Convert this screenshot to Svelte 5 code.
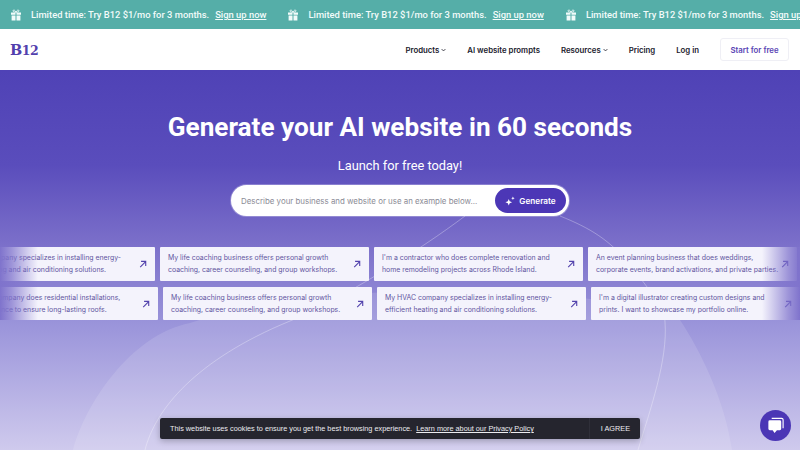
<script lang="ts">
  const row1 = [
    ['My HVAC company specializes in installing energy-', 'efficient heating and air conditioning solutions.'],
    ['My life coaching business offers personal growth', 'coaching, career counseling, and group workshops.'],
    ["I'm a contractor who does complete renovation and", 'home remodeling projects across Rhode Island.'],
    ['An event planning business that does weddings,', 'corporate events, brand activations, and private parties.']
  ];
  const row2 = [
    ['My roofing company does residential installations,', 'and maintenance to ensure long-lasting roofs.'],
    ['My life coaching business offers personal growth', 'coaching, career counseling, and group workshops.'],
    ['My HVAC company specializes in installing energy-', 'efficient heating and air conditioning solutions.'],
    ["I'm a digital illustrator creating custom designs and", 'prints. I want to showcase my portfolio online.']
  ];
  const promos = [0, 1, 2];
</script>

{#snippet gift()}
  <svg class="gift" viewBox="0 0 12 12" width="12" height="12" aria-hidden="true">
    <path d="M1 3.400h4.500v2.300H1zM6.500 3.400H11v2.300H6.500zM1.600 6.500h3.900v5H1.600zM6.500 6.500h3.900v5H6.500z" fill="#f2fbfa" />
    <path d="M6 3.200C5 .8 3.200.5 3 1.800c-.1 1 1.500 1.400 3 1.400 1.500 0 3.100-.4 3-1.400C8.800.5 7 .8 6 3.200z" fill="none" stroke="#f2fbfa" stroke-width=".9" />
  </svg>
{/snippet}

{#snippet arrow()}
  <svg class="arrow" viewBox="0 0 10 10" width="8" height="8" aria-hidden="true">
    <path d="M1.500 8.800 8.300 2M2.600 1.700h5.800v5.800" fill="none" stroke="currentColor" stroke-width="1.400" />
  </svg>
{/snippet}

{#snippet chevron()}
  <svg class="chev" viewBox="0 0 8 5" width="5" height="4" aria-hidden="true">
    <path d="M1 1l3 3 3-3" fill="none" stroke="currentColor" stroke-width="1.300" />
  </svg>
{/snippet}

<div class="page">
  <div class="promo">
    {#each promos as p (p)}
      <div class="promo-item">
        {@render gift()}
        <span class="promo-text">Limited time: Try B12 $1/mo for 3 months.</span>
        <a href="#signup" class="promo-link">Sign up now</a>
      </div>
    {/each}
  </div>

  <header class="nav">
    <a href="#home" class="logo">B<span class="logo-num">12</span></a>
    <nav class="links">
      <a href="#products" class="link">Products {@render chevron()}</a>
      <a href="#prompts" class="link">AI website prompts</a>
      <a href="#resources" class="link">Resources {@render chevron()}</a>
      <a href="#pricing" class="link">Pricing</a>
      <a href="#login" class="link">Log in</a>
      <a href="#start" class="start">Start for free</a>
    </nav>
  </header>

  <main class="hero">
    <svg class="curves" viewBox="0 0 800 380" aria-hidden="true">
      <path d="M73 380C85 335 130 265 190 253C300 215 560 205 680 250C700 280 725 330 732 380z" fill="#ffffff" fill-opacity=".12" />
      <path d="M145 380C155 340 195 290 290 251C340 230 420 180 465 146" fill="none" stroke="#ffffff" stroke-opacity=".3" />
      <path d="M560 146C590 158 610 170 630 195C650 220 665 240 665 252C668 290 650 340 638 380" fill="none" stroke="#ffffff" stroke-opacity=".3" />
    </svg>

    <h1>Generate your AI website in 60 seconds</h1>
    <p class="sub">Launch for free today!</p>

    <div class="search">
      <span class="placeholder">Describe your business and website or use an example below...</span>
      <button class="generate">
        <svg viewBox="0 0 12 12" width="10" height="10" aria-hidden="true">
          <path d="M4.500 3.500 5.600 6.400 8.500 7.500 5.600 8.600 4.500 11.500 3.400 8.600.5 7.500 3.400 6.400zM9.500.5l.6 1.500 1.500.6-1.500.6-.6 1.500-.6-1.500-1.500-.6 1.500-.6z" fill="#fff" />
        </svg>
        Generate
      </button>
    </div>

    <div class="examples">
      <div class="row row-one">
        {#each row1 as lines, i (i)}
          <div class="card">
            <span class="card-text">{lines[0]}<br />{lines[1]}</span>
            {@render arrow()}
          </div>
        {/each}
      </div>
      <div class="row row-two">
        {#each row2 as lines, i (i)}
          <div class="card">
            <span class="card-text">{lines[0]}<br />{lines[1]}</span>
            {@render arrow()}
          </div>
        {/each}
      </div>
      <div class="fade fade-left"></div>
      <div class="fade fade-right"></div>
    </div>
  </main>

  <div class="cookie">
    <span class="cookie-text">This website uses cookies to ensure you get the best browsing experience. <a href="#privacy">Learn more about our Privacy Policy</a></span>
    <button class="agree">I AGREE</button>
  </div>

  <button class="chat" aria-label="Open chat">
    <svg viewBox="0 0 20 20" width="19" height="19" aria-hidden="true">
      <path d="M6 2.500h10.500a1.500 1.500 0 0 1 1.500 1.500v9" fill="none" stroke="#fff" stroke-width="1.200" />
      <path d="M4 4.500h10.500a1.500 1.500 0 0 1 1.500 1.500v7.500a1.500 1.500 0 0 1-1.500 1.500H11.500L9 18l-2-3H4a1.500 1.500 0 0 1-1.500-1.500V6A1.500 1.500 0 0 1 4 4.500z" fill="#fff" />
    </svg>
  </button>
</div>

<style>
  :global(body) {
    margin: 0;
    background: #fff;
  }

  .page {
    position: relative;
    width: 800px;
    height: 450px;
    overflow: hidden;
    display: flex;
    flex-direction: column;
    font-family: Roboto, "Liberation Sans", sans-serif;
  }

  .promo {
    flex: none;
    height: 29px;
    padding-left: 10px;
    display: flex;
    align-items: center;
    gap: 21px;
    background: #55aea8;
    color: #f2fbfa;
    white-space: nowrap;
    font-size: 9.400px;
    font-weight: 500;
  }

  .promo-item {
    flex: none;
    display: flex;
    align-items: center;
  }

  .gift {
    margin-right: 9px;
  }

  .promo-link {
    margin-left: 6px;
    color: inherit;
  }

  .nav {
    flex: none;
    height: 41px;
    padding: 0 11px 0 10px;
    display: flex;
    align-items: center;
    justify-content: space-between;
    background: #fff;
  }

  .logo {
    font-family: "DejaVu Serif", "Liberation Serif", serif;
    font-size: 14.500px;
    font-weight: 700;
    color: #5240ad;
    text-decoration: none;
    letter-spacing: -.5px;
  }

  .logo-num {
    font-size: 12.500px;
  }

  .links {
    display: flex;
    align-items: center;
  }

  .link {
    margin-right: 21px;
    font-family: Inter, sans-serif;
    font-size: 7.800px;
    font-weight: 600;
    color: #20202c;
    text-decoration: none;
    white-space: nowrap;
  }

  .chev {
    vertical-align: middle;
  }

  .start {
    width: 69px;
    height: 23px;
    display: flex;
    align-items: center;
    justify-content: center;
    box-sizing: border-box;
    border: 1px solid #efeff5;
    border-radius: 3px;
    font-family: Inter, sans-serif;
    font-size: 7.800px;
    font-weight: 600;
    color: #5a45b4;
    text-decoration: none;
  }

  .hero {
    position: relative;
    flex: 1;
    display: flex;
    flex-direction: column;
    align-items: center;
    overflow: hidden;
    background: linear-gradient(180deg, #4f42b6 0%, #5a4dbc 25%, #7a6ec9 45%, #9c96db 68%, #cfcaed 100%);
  }

  .curves {
    position: absolute;
    inset: 0;
    width: 100%;
    height: 100%;
  }

  h1 {
    position: relative;
    margin: 41px 0 0;
    font-size: 26.150px;
    line-height: 32px;
    font-weight: 700;
    color: #fff;
  }

  .sub {
    position: relative;
    margin: 14px 0 0;
    font-size: 12.800px;
    line-height: 18px;
    font-weight: 400;
    color: #fff;
  }

  .search {
    position: relative;
    margin-top: 10px;
    width: 338px;
    height: 31px;
    box-sizing: border-box;
    padding: 0 3px 0 10px;
    display: flex;
    align-items: center;
    justify-content: space-between;
    background: #fff;
    border-radius: 16px;
    box-shadow: 0 0 0 1px rgba(255, 255, 255, .25);
  }

  .placeholder {
    font-family: Inter, sans-serif;
    font-size: 7.900px;
    color: #8b8b96;
    white-space: nowrap;
  }

  .generate {
    width: 71px;
    height: 25px;
    padding: 0;
    display: flex;
    align-items: center;
    justify-content: center;
    gap: 4px;
    border: none;
    border-radius: 13px;
    background: #4c37b6;
    color: #fff;
    font-family: Inter, sans-serif;
    font-size: 8.200px;
    font-weight: 600;
  }

  .examples {
    position: relative;
    width: 800px;
    margin-top: 31px;
    display: flex;
    flex-direction: column;
    gap: 6px;
  }

  .row {
    display: flex;
    gap: 5px;
    height: 34px;
  }

  .row-one {
    margin-left: -54px;
  }

  .row-two {
    margin-left: -51px;
    height: 33px;
  }

  .card {
    flex: none;
    width: 209px;
    box-sizing: border-box;
    padding: 0 8px;
    display: flex;
    align-items: center;
    justify-content: space-between;
    background: #f4f3fc;
    border-radius: 1px;
    color: #62559f;
  }

  .card-text {
    font-family: Inter, sans-serif;
    font-size: 6.900px;
    line-height: 12px;
    white-space: nowrap;
  }

  .arrow {
    flex: none;
    color: #5343ad;
  }

  .fade {
    position: absolute;
    top: 0;
    bottom: 0;
    width: 38px;
  }

  .fade-left {
    left: 0;
    background: linear-gradient(90deg, #7f73cc 0%, rgba(127, 115, 204, .75) 30%, rgba(127, 115, 204, 0) 100%);
  }

  .fade-right {
    right: 0;
    background: linear-gradient(270deg, #7f73cc 0%, rgba(127, 115, 204, .75) 30%, rgba(127, 115, 204, 0) 100%);
  }

  .cookie {
    position: absolute;
    left: 160px;
    top: 418px;
    width: 480px;
    height: 21px;
    box-sizing: border-box;
    padding: 0 10px;
    display: flex;
    align-items: center;
    justify-content: space-between;
    background: #25252e;
    border-radius: 2px;
    box-shadow: 0 2px 6px rgba(0, 0, 0, .25);
    color: #ececf0;
    font-family: "Liberation Sans", sans-serif;
    font-size: 7.300px;
    white-space: nowrap;
  }

  .cookie a {
    margin-left: 2px;
    color: inherit;
  }

  .agree {
    height: 21px;
    padding: 0 0 0 11px;
    border: none;
    border-left: 1px solid #2f2f39;
    background: none;
    color: inherit;
    font: inherit;
  }

  .chat {
    position: absolute;
    left: 760px;
    top: 410px;
    width: 31px;
    height: 31px;
    padding: 0;
    display: flex;
    align-items: center;
    justify-content: center;
    border: none;
    border-radius: 50%;
    background: #4b36b5;
  }
</style>
